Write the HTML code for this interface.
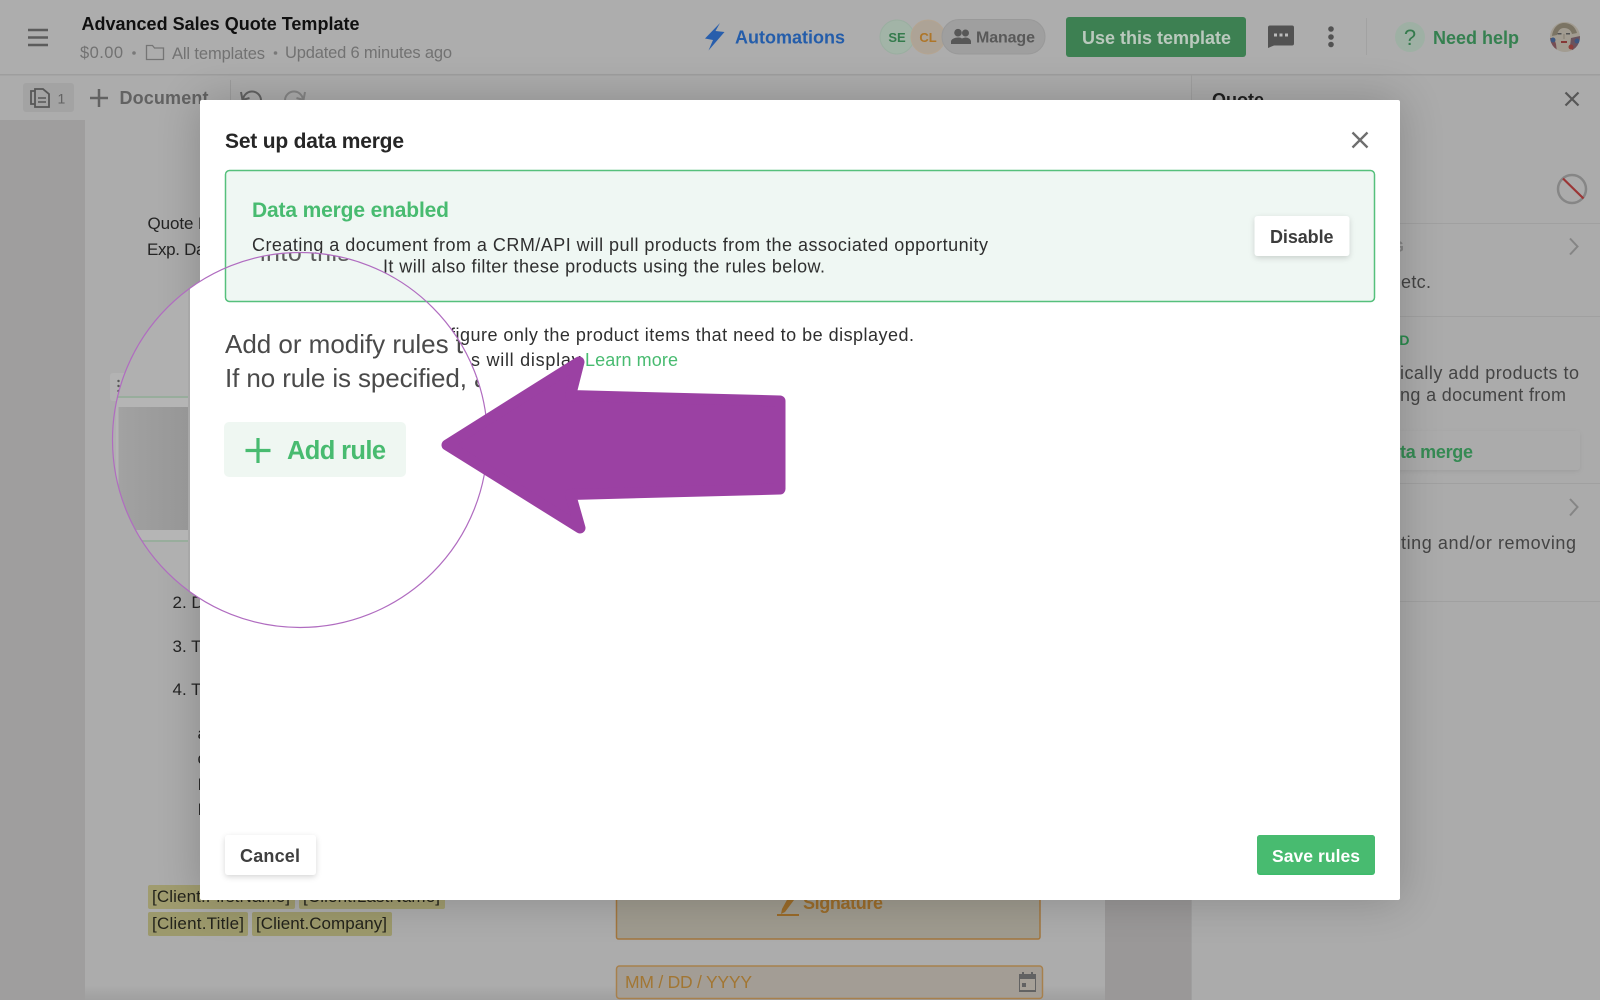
<!DOCTYPE html>
<html>
<head>
<meta charset="utf-8">
<title>Set up data merge</title>
<style>
html,body{margin:0;padding:0;background:#b3b3b3;width:1600px;height:1000px;overflow:hidden}
svg{display:block}
text{font-family:"Liberation Sans",Arial,sans-serif}
.b{font-weight:700}
</style>
</head>
<body>
<svg width="1600" height="1000" viewBox="0 0 1600 1000" xmlns="http://www.w3.org/2000/svg">
<defs>
<filter id="blur" x="-10%" y="-10%" width="120%" height="120%"><feGaussianBlur stdDeviation="22"/></filter>
<filter id="sh" x="-30%" y="-30%" width="160%" height="180%"><feDropShadow dx="0" dy="2" stdDeviation="3" flood-color="#000" flood-opacity=".16"/></filter>
<filter id="sh2" x="-10%" y="-30%" width="120%" height="180%"><feDropShadow dx="0" dy="1.500" stdDeviation="2" flood-color="#000" flood-opacity=".07"/></filter>
<clipPath id="lens"><circle cx="300" cy="440" r="187.5"/></clipPath>
<clipPath id="tb"><rect x="0" y="75" width="1600" height="45"/></clipPath>
<clipPath id="av"><circle cx="1565" cy="37" r="15"/></clipPath>
<linearGradient id="botg" x1="0" y1="0" x2="0" y2="1"><stop offset="0" stop-color="#000" stop-opacity="0"/><stop offset="1" stop-color="#000" stop-opacity=".07"/></linearGradient>
<linearGradient id="img" x1="0" y1="0" x2="1" y2="0"><stop offset="0" stop-color="#a2a2a2"/><stop offset="1" stop-color="#969696"/></linearGradient>
</defs>

<!-- background app -->
<rect width="1600" height="1000" fill="#b2b2b2"/>
<rect x="0" y="120" width="85" height="880" fill="#a5a4a4"/>
<rect x="1105" y="120" width="87" height="880" fill="#9f9d9d"/>
<rect x="1192" y="75" width="408" height="925" fill="#b1b1b1"/>
<rect x="1191" y="75" width="1" height="925" fill="#a5a5a5"/>
<rect x="85" y="985" width="1020" height="15" fill="url(#botg)"/>

<!-- header -->
<rect width="1600" height="74" fill="#b3b3b3"/>
<rect y="74" width="1600" height="1.500" fill="#a4a4a4"/>
<path d="M28 30H48M28 37.500H48M28 45H48" stroke="#5f5f5f" stroke-width="2.600" fill="none"/>
<text x="81.500" y="30" font-size="18" class="b" fill="#111" textLength="278">Advanced Sales Quote Template</text>
<text x="80" y="58" font-size="16.500" fill="#767676" textLength="43">$0.00</text>
<circle cx="134" cy="53" r="1.800" fill="#7d7d7d"/>
<path d="M146.500 45.500h6l2 2.500h9v11.500h-17z" fill="none" stroke="#797979" stroke-width="1.300"/>
<text x="172" y="59" font-size="16.500" fill="#767676" textLength="93">All templates</text>
<circle cx="275.500" cy="53" r="1.800" fill="#7d7d7d"/>
<text x="285" y="58" font-size="16.500" fill="#767676" textLength="167">Updated 6 minutes ago</text>

<path d="M720 23L705 38.500L713 40L708.500 50.500L724.500 32L715.500 31Z" fill="#2a62b2"/>
<text x="735" y="43.500" font-size="18" class="b" fill="#2660b0" textLength="110">Automations</text>

<circle cx="897" cy="37" r="17" fill="#a8baad" stroke="#9fb4a6"/>
<text x="897" y="42" font-size="13" class="b" fill="#377f50" text-anchor="middle">SE</text>
<circle cx="928" cy="37" r="17" fill="#b3a99b" stroke="#baaa96"/>
<text x="928" y="42" font-size="13" class="b" fill="#b47a2b" text-anchor="middle">CL</text>
<rect x="942" y="19.500" width="103" height="34.500" rx="17" fill="#a5a5a5" stroke="#9e9e9e"/>
<path d="M951 44v-2.500c0-2.500 4-4 7-4s3 .5 4 1c1-.5 2.500-1 3.500-1 2.500 0 5.500 1.500 5.500 4V44zM958 36.500a3.800 3.800 0 1 0 0-7.600 3.800 3.800 0 0 0 0 7.600zM965.500 36.500a3.500 3.500 0 1 0 0-7 3.500 3.500 0 0 0 0 7z" fill="#5a5a5a"/>
<text x="976" y="42.500" font-size="16" class="b" fill="#5c5c5c" textLength="59">Manage</text>

<rect x="1066" y="17" width="180" height="40" rx="3" fill="#3f8555"/>
<text x="1082" y="44" font-size="18" class="b" fill="#c0d0c4" textLength="149">Use this template</text>

<path d="M1270 25.500h22a2 2 0 0 1 2 2v16a2 2 0 0 1-2 2h-18l-6 2.500V27.500a2 2 0 0 1 2-2z" fill="#555"/>
<rect x="1274" y="33.500" width="3" height="3" fill="#c2c2c2"/><rect x="1279.500" y="33.500" width="3" height="3" fill="#c2c2c2"/><rect x="1285" y="33.500" width="3" height="3" fill="#c2c2c2"/>
<circle cx="1331" cy="29" r="2.800" fill="#555"/><circle cx="1331" cy="37" r="2.800" fill="#555"/><circle cx="1331" cy="44.500" r="2.800" fill="#555"/>
<rect x="1366" y="18" width="1" height="37" fill="#a8a8a8"/>
<circle cx="1410" cy="37" r="15" fill="#a4b6aa"/>
<text x="1410" y="45" font-size="22" fill="#377f50" text-anchor="middle">?</text>
<text x="1433" y="44" font-size="18" class="b" fill="#378553" textLength="86">Need help</text>
<g clip-path="url(#av)">
<rect x="1550" y="22" width="30" height="30" fill="#a8a296"/>
<path d="M1552 36c1-8 6-13 12-13s11 3 13 10l-5 1c-1-4-4-6-8-6s-6 3-7 7z" fill="#7f7868"/>
<rect x="1557.500" y="33" width="4" height="1.500" fill="#555"/><rect x="1566" y="33" width="4" height="1.500" fill="#555"/>
<path d="M1564 34v5" stroke="#8a8375" stroke-width="1"/>
<rect x="1561" y="41" width="6" height="2" fill="#8a3a38"/>
<path d="M1550 38l4 0 2 6 1 8h-7z" fill="#7a5056"/>
<circle cx="1553" cy="40" r="2.500" fill="#3f5a86"/>
<path d="M1571 38l9-2v10l-7 6-3-6z" fill="#6f5660"/>
<circle cx="1577" cy="41" r="2.500" fill="#3f5a86"/>
<circle cx="1571" cy="47" r="2.500" fill="#93403c"/>
</g>

<!-- toolbar -->
<rect x="23" y="83" width="51" height="29" rx="3" fill="#a9a9a9"/>
<path d="M35 89h8l6 5v13H35zM35 91h-4v13h4" fill="none" stroke="#5a5a5a" stroke-width="1.800"/>
<path d="M38 98h8M38 102h8" stroke="#5a5a5a" stroke-width="1.500"/>
<text x="57.500" y="103.500" font-size="14" fill="#666">1</text>
<path d="M99 89v18M90 98h18" stroke="#666" stroke-width="2.500"/>
<text x="119.500" y="104" font-size="18" class="b" fill="#666" textLength="89">Document</text>
<rect x="230" y="80" width="1" height="22" fill="#a2a2a2"/>
<g clip-path="url(#tb)">
<path d="M243 101a9 9 0 0 1 18-1M241 92l1.500 8 7-2" fill="none" stroke="#666" stroke-width="2"/>
<path d="M303 101a9 9 0 0 0-18-1M305 92l-1.500 8-7-2" fill="none" stroke="#8a8a8a" stroke-width="2"/>
</g>

<!-- document text -->
<text x="147.500" y="229" font-size="17" fill="#262626" textLength="46">Quote</text>
<text x="198" y="229" font-size="17" fill="#262626">Number</text>
<text x="147" y="255" font-size="17" fill="#262626" textLength="72">Exp. Date</text>
<text x="172.500" y="608" font-size="17" fill="#262626">2. Do</text>
<text x="172.500" y="652" font-size="17" fill="#262626">3. The</text>
<text x="172.500" y="695" font-size="17" fill="#262626">4. The</text>
<text x="197.500" y="739" font-size="17" fill="#262626">a</text>
<text x="197.500" y="764" font-size="17" fill="#262626">c</text>
<text x="197.500" y="790" font-size="17" fill="#262626">I</text>
<text x="197.500" y="815" font-size="17" fill="#262626">I</text>

<rect x="148" y="885" width="147" height="24" rx="2" fill="#a6a273"/>
<rect x="299" y="885" width="146" height="24" rx="2" fill="#a6a273"/>
<rect x="148" y="912" width="100" height="24" rx="2" fill="#a29e70"/>
<rect x="252" y="912" width="140" height="24" rx="2" fill="#a29e70"/>
<text x="152" y="902" font-size="17" fill="#25251c" textLength="138">[Client.FirstName]</text>
<text x="303" y="902" font-size="17" fill="#25251c" textLength="137">[Client.LastName]</text>
<text x="152" y="929" font-size="17" fill="#25251c" textLength="92">[Client.Title]</text>
<text x="256" y="929" font-size="17" fill="#25251c" textLength="131">[Client.Company]</text>

<rect x="616.500" y="860" width="423.500" height="79" rx="2" fill="#a5a094" stroke="#a87a40" stroke-width="1.500"/>
<path d="M788 898l6 2-9 12-4 2 1-5z" fill="#a0702c"/>
<rect x="777" y="914" width="22" height="2" fill="#a0702c"/>
<text x="803" y="909" font-size="18" class="b" fill="#a0702c" textLength="80">Signature</text>
<rect x="616.500" y="966" width="426" height="32.500" rx="3" fill="#a9a39a" stroke="#ad8550" stroke-width="1.500"/>
<text x="625" y="988" font-size="17.500" fill="#a87a35" textLength="127">MM / DD / YYYY</text>
<path d="M1019 974h3v-2h2v2h7v-2h2v2h3v18h-17z" fill="#666"/>
<rect x="1020" y="979" width="15" height="11" fill="#aca69c"/>
<rect x="1022" y="983" width="4" height="4" fill="#666"/>

<!-- right panel -->
<text x="1212" y="106" font-size="18" class="b" fill="#222" textLength="52">Quote</text>
<path d="M1565.500 92.500L1578.500 105.500M1578.500 92.500L1565.500 105.500" stroke="#5a5a5a" stroke-width="2.200"/>
<circle cx="1572" cy="189" r="14" fill="none" stroke="#8b8b8b" stroke-width="2.500"/>
<path d="M1563 178.500L1583.500 198.500" stroke="#a03838" stroke-width="2.200"/>
<rect x="1192" y="223" width="408" height="1" fill="#a6a6a6"/>
<rect x="1192" y="316" width="408" height="1" fill="#a6a6a6"/>
<rect x="1192" y="483" width="408" height="1" fill="#a6a6a6"/>
<rect x="1192" y="601" width="408" height="1" fill="#a6a6a6"/>
<text x="1380" y="252" font-size="16" class="b" fill="#8a8a8a">NG</text>
<path d="M1570 238.500L1577.500 246.500L1570 254.500" fill="none" stroke="#8a8a8a" stroke-width="2"/>
<text x="1401" y="288" font-size="18" fill="#474747" textLength="30">etc.</text>
<text x="1390" y="345" font-size="14" class="b" fill="#2c8f50">ED</text>
<text x="1400" y="379" font-size="18" fill="#474747" textLength="179">ically add products to</text>
<text x="1400" y="401" font-size="18" fill="#474747" textLength="166">ng a document from</text>
<rect x="1300" y="431" width="280" height="39" rx="3" fill="#b1b1b1" filter="url(#sh2)"/>
<text x="1400" y="458" font-size="18" class="b" fill="#388f57" textLength="73">ta merge</text>
<path d="M1570 499L1577.500 507L1570 515.500" fill="none" stroke="#8a8a8a" stroke-width="2"/>
<text x="1401" y="549" font-size="18" fill="#474747" textLength="175">ting and/or removing</text>

<!-- handle under lens -->
<rect x="110" y="373" width="30" height="28" rx="3" fill="#b9b9b9"/>
<circle cx="118.500" cy="381" r="1.200" fill="#5a5a5a"/><circle cx="118.500" cy="386" r="1.200" fill="#5a5a5a"/><circle cx="118.500" cy="391" r="1.200" fill="#5a5a5a"/>

<!-- slight global dim for background layer -->
<rect width="1600" height="1000" fill="#000" opacity=".03"/>

<!-- modal -->
<rect x="200" y="100" width="1200" height="800" fill="#000" opacity=".2" filter="url(#blur)"/>
<rect x="200" y="100" width="1200" height="800" rx="2" fill="#fff"/>
<text x="225" y="148" font-size="21" class="b" fill="#262626" textLength="179">Set up data merge</text>
<path d="M1352.500 132.500L1367.500 147.500M1367.500 132.500L1352.500 147.500" stroke="#6e6e6e" stroke-width="2.300"/>

<rect x="225.500" y="170.500" width="1149" height="131" rx="4" fill="#eff7f3" stroke="#56c07c" stroke-width="1.500"/>
<text x="252" y="217" font-size="21" class="b" fill="#48bb70" textLength="197">Data merge enabled</text>
<text x="252" y="251" font-size="18" fill="#2f2f2f" textLength="736">Creating a document from a CRM/API will pull products from the associated opportunity</text>
<text x="383" y="272.500" font-size="18" fill="#2f2f2f" textLength="442">It will also filter these products using the rules below.</text>
<rect x="1254.500" y="216" width="95" height="40" rx="3" fill="#fff" filter="url(#sh)"/>
<text x="1270" y="243" font-size="18" class="b" fill="#3c3c3c" textLength="63.500">Disable</text>

<text x="450" y="341" font-size="18" fill="#2f2f2f" textLength="464">figure only the product items that need to be displayed.</text>
<text x="471" y="366" font-size="18" fill="#2f2f2f" textLength="114">s will display.</text>
<text x="585" y="366" font-size="18" fill="#48bb70" textLength="93">Learn more</text>

<rect x="225" y="835" width="91" height="40" rx="3" fill="#fff" filter="url(#sh)"/>
<text x="240" y="862" font-size="18" class="b" fill="#3f3f3f" textLength="60">Cancel</text>
<rect x="1257" y="835" width="118" height="40" rx="3" fill="#3dbb6b"/>
<rect x="1257" y="835" width="118" height="38.500" rx="3" fill="#48bb70"/>
<text x="1272" y="862" font-size="17.500" class="b" fill="#fff" textLength="88">Save rules</text>

<!-- lens -->
<g clip-path="url(#lens)">
<rect x="100" y="240" width="400" height="400" fill="#b0b0b0"/>
<rect x="116" y="398" width="74" height="142" fill="#b5b5b5"/>
<rect x="116" y="396" width="74" height="2" fill="#98ad9c"/>
<rect x="118.500" y="407" width="71.500" height="123" fill="url(#img)"/>
<rect x="116" y="540" width="74" height="2" fill="#98ad9c"/>
<rect x="188" y="240" width="2" height="400" fill="#a8a8a8"/>
<rect x="190" y="240" width="310" height="400" fill="#fff"/>
<rect x="225.500" y="170.500" width="400" height="131" rx="4" fill="#eff7f3" stroke="#56c07c" stroke-width="1.500"/>
<text x="260" y="261" font-size="25" fill="#5a5a5a" textLength="90">into this</text>
<rect x="366" y="259" width="7" height="2" fill="#5a5a5a"/>
<text x="225" y="353" font-size="26" fill="#4a4a4a" textLength="238">Add or modify rules t</text>
<text x="225" y="387" font-size="26" fill="#4a4a4a" textLength="242">If no rule is specified,</text>
<text x="474" y="387" font-size="26" fill="#4a4a4a">a</text>
<rect x="224" y="422" width="182" height="55" rx="5" fill="#eff7f2"/>
<path d="M258 438v25M245.500 450.500h25" stroke="#48bb70" stroke-width="3.200"/>
<text x="287" y="459" font-size="25.500" class="b" fill="#48bb70" textLength="99">Add rule</text>
</g>
<circle cx="300" cy="440" r="187.500" fill="none" stroke="#b06cc0" stroke-width="1.200"/>

<!-- arrow -->
<path d="M447 445L579 362L570.500 395.500L780 401V489L570.500 494.500L580 528Z" fill="#9b41a3" stroke="#9b41a3" stroke-width="11" stroke-linejoin="round"/>
</svg>
</body>
</html>
